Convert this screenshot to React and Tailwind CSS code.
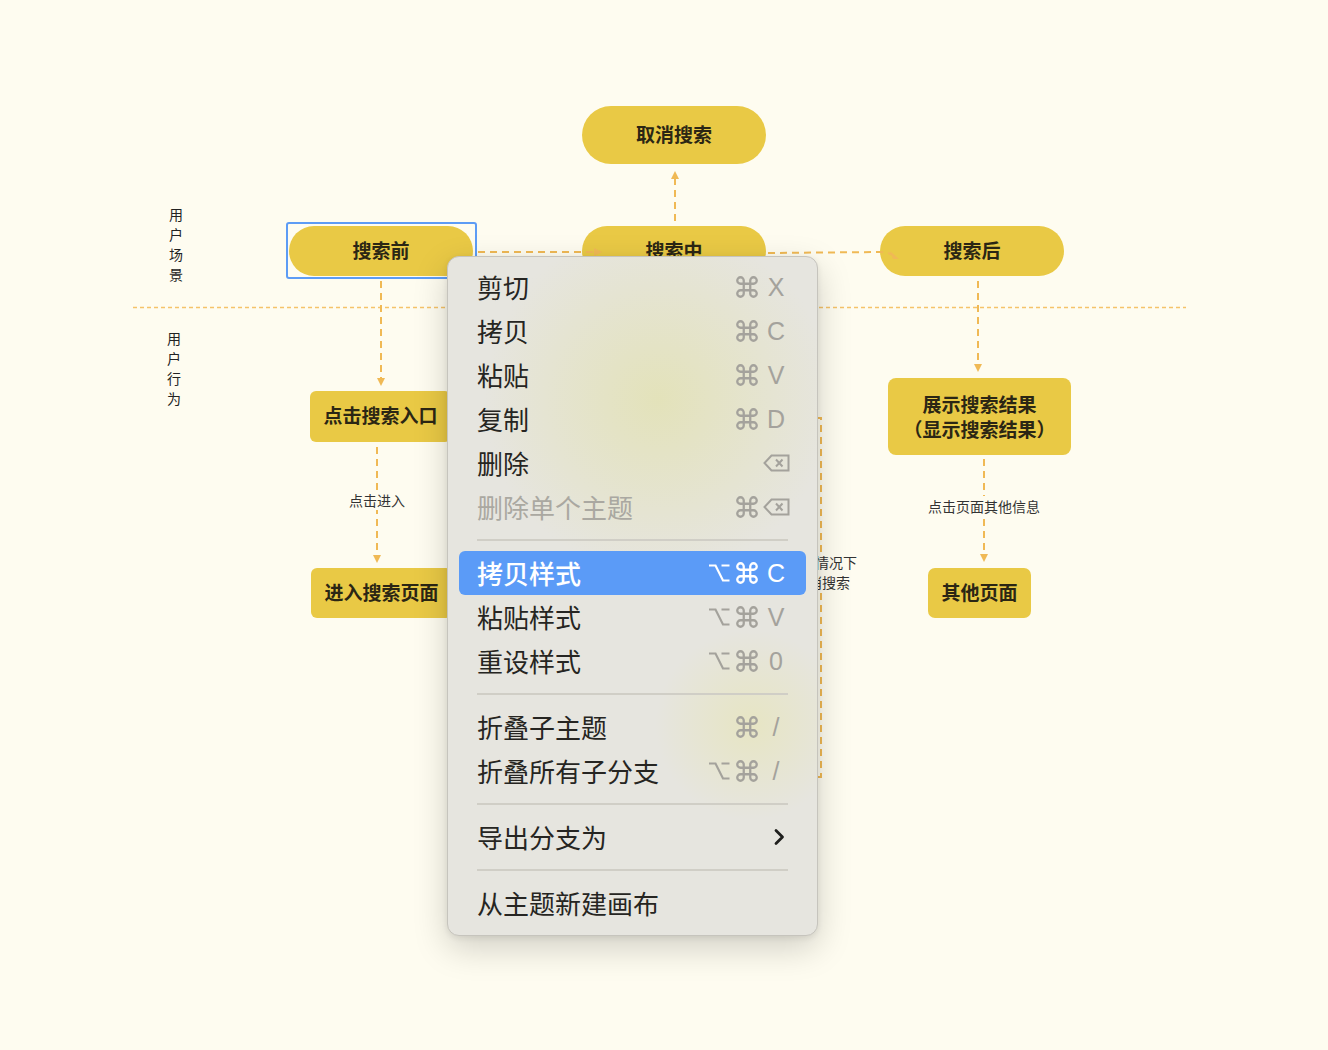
import React from "react";
import { Command } from "lucide-react";

const CJK = "font-['Noto_Sans_CJK_SC','Noto_Sans',sans-serif]";
const LINE = "#f0b955";

// node boxes on the canvas
const Node = ({ x, y, w, h, round, children, className = "" }) => (
  <div
    className={`absolute flex items-center justify-center pb-[2px] bg-[#e9c945] text-[19px] font-bold text-[#2b2614] ${round} ${className}`}
    style={{ left: x, top: y, width: w, height: h }}
  >
    {children}
  </div>
);

const Label = ({ x, y, children }) => (
  <div
    className="absolute h-[20px] bg-[#fefcf0] text-[14px] leading-[20px] text-[#333] whitespace-nowrap"
    style={{ left: x, top: y }}
  >
    {children}
  </div>
);

const down = (x, y) => `${x - 4},${y - 8} ${x + 4},${y - 8} ${x},${y}`;
const up = (x, y) => `${x - 4},${y + 8} ${x + 4},${y + 8} ${x},${y}`;
const right = (x, y) => `${x - 8},${y - 4} ${x - 8},${y + 4} ${x},${y}`;

const Connectors = () => (
  <svg className="absolute inset-0 pointer-events-none" width="1328" height="1050">
    <line x1="133" y1="307.5" x2="1186" y2="307.5" stroke="#f5c36a" strokeWidth="1.3" strokeDasharray="4 3" />
    <g stroke={LINE} strokeWidth="2" strokeDasharray="7 5" fill="none">
      <line x1="381" y1="281" x2="381" y2="378" />
      <line x1="377" y1="447" x2="377" y2="555" />
      <line x1="478" y1="252" x2="594" y2="252" />
      <line x1="675" y1="221" x2="675" y2="179" />
      <path d="M768 253 L880 252 Q888 252 892 255" />
      <line x1="978" y1="281" x2="978" y2="364" />
      <line x1="984" y1="459" x2="984" y2="554" />
      <path d="M780 418 H821 V777 H780" />
    </g>
    <g fill={LINE}>
      <polygon points={down(381, 386)} />
      <polygon points={down(377, 563)} />
      <polygon points={right(602, 252)} />
      <polygon points={up(675, 171)} />
      <polygon points="890,251 893,259 899,259" />
      <polygon points={down(978, 372)} />
      <polygon points={down(984, 562)} />
    </g>
  </svg>
);

const Option = ({ color }) => (
  <svg width="22" height="18" viewBox="0 0 22 18" fill="none" stroke={color} strokeWidth="2.2">
    <path d="M1 1.5h6.5l7.5 15h6.5M13.5 1.5h8" />
  </svg>
);

const Backspace = ({ color }) => (
  <svg width="27" height="18" viewBox="0 0 27 18" fill="none" stroke={color} strokeWidth="2">
    <path d="M8.5 1.5H25.5V16.5H8.5L1.5 9Z" />
    <path d="M13 5.5L19.5 12.5M19.5 5.5L13 12.5" />
  </svg>
);

const Chevron = () => (
  <svg width="12" height="18" viewBox="0 0 12 18" fill="none" stroke="#1f1f1d" strokeWidth="2.8" strokeLinecap="round" strokeLinejoin="round">
    <path d="M3 2.5l6.5 6.5L3 15.5" />
  </svg>
);

const Shortcut = ({ opt, cmd, keyName, del, chevron, color }) => (
  <div className="flex items-center h-[44px]">
    <div className="w-[28px] flex items-center">{opt && <Option color={color} />}</div>
    <div className="w-[30px] flex items-center">
      {cmd && <Command size={26} strokeWidth={2.1} color={color} className="-ml-[2px]" />}
    </div>
    <div
      className="w-[20px] flex items-center justify-center text-[25px] leading-none font-['Liberation_Sans',sans-serif]"
      style={{ color }}
    >
      {del && <div className="shrink-0"><Backspace color={color} /></div>}
      {chevron && <div className="shrink-0 ml-[6px]"><Chevron /></div>}
      {keyName}
    </div>
  </div>
);

const GRAY = "#a4a29c";

const groups = [
  [
    { t: "剪切", cmd: true, k: "X" },
    { t: "拷贝", cmd: true, k: "C" },
    { t: "粘贴", cmd: true, k: "V" },
    { t: "复制", cmd: true, k: "D" },
    { t: "删除", del: true },
    { t: "删除单个主题", cmd: true, del: true, disabled: true },
  ],
  [
    { t: "拷贝样式", opt: true, cmd: true, k: "C", active: true },
    { t: "粘贴样式", opt: true, cmd: true, k: "V" },
    { t: "重设样式", opt: true, cmd: true, k: "0" },
  ],
  [
    { t: "折叠子主题", cmd: true, k: "/" },
    { t: "折叠所有子分支", opt: true, cmd: true, k: "/" },
  ],
  [{ t: "导出分支为", chevron: true }],
  [{ t: "从主题新建画布" }],
];

const Menu = () => (
  <div className="absolute left-[447px] top-[256px] w-[371px] rounded-[12px] border border-[#c6c4bd] bg-[#e6e5df] bg-[image:radial-gradient(circle_at_57%_21%,rgba(227,226,184,0.95),rgba(228,227,190,0)_175px),radial-gradient(circle_at_82%_69%,rgba(231,229,186,0.75),rgba(232,230,190,0)_95px)] pt-[8px] pb-[10px] shadow-[0_12px_34px_rgba(0,0,0,0.18),0_2px_6px_rgba(0,0,0,0.08)]">
    {groups.map((g, gi) => (
      <div key={gi}>
        {gi > 0 && (
          <div className="h-[22px] flex items-center mx-[29px]">
            <div className="h-[2px] w-full bg-[#d0cec6]" />
          </div>
        )}
        {g.map((r) => {
          const color = r.active ? "#ffffff" : GRAY;
          return (
            <div
              key={r.t}
              className={`mx-[11px] h-[44px] pl-[18px] pr-[20px] flex items-center justify-between rounded-[6px] ${
                r.active ? "bg-[#5b9bf7]" : ""
              }`}
            >
              <span
                className={`text-[26px] leading-[44px] ${
                  r.active ? "text-white font-medium" : r.disabled ? "text-[#aaa8a1]" : "text-[#262522]"
                }`}
              >
                {r.t}
              </span>
              <Shortcut
                opt={r.opt}
                cmd={r.cmd}
                keyName={r.k}
                del={r.del}
                chevron={r.chevron}
                color={color}
              />
            </div>
          );
        })}
      </div>
    ))}
  </div>
);

export default function App() {
  return (
    <div className={`relative w-[1328px] h-[1050px] overflow-hidden bg-[#fefcf0] ${CJK}`}>
      {/* row labels */}
      <div className="absolute left-[169px] top-[204px] flex flex-col text-[14px] leading-[20px] text-[#222]">
        <span>用</span><span>户</span><span>场</span><span>景</span>
      </div>
      <div className="absolute left-[167px] top-[328px] flex flex-col text-[14px] leading-[20px] text-[#222]">
        <span>用</span><span>户</span><span>行</span><span>为</span>
      </div>

      <Node x={582} y={106} w={184} h={58} round="rounded-full">取消搜索</Node>
      <Node x={289} y={226} w={184} h={50} round="rounded-full">搜索前</Node>
      <Node x={582} y={226} w={184} h={50} round="rounded-full">搜索中</Node>
      <Node x={880} y={226} w={184} h={50} round="rounded-full">搜索后</Node>
      <Node x={310} y={391} w={141} h={51} round="rounded-[6px]">点击搜索入口</Node>
      <Node x={311} y={568} w={141} h={50} round="rounded-[6px]">进入搜索页面</Node>
      <Node x={888} y={378} w={183} h={77} round="rounded-[8px]" className="flex-col leading-[25px] [font-feature-settings:'halt']">
        <span>展示搜索结果</span>
        <span>（显示搜索结果）</span>
      </Node>
      <Node x={928} y={568} w={103} h={50} round="rounded-[7px]">其他页面</Node>

      <Connectors />

      <Label x={349} y={490}>点击进入</Label>
      <Label x={928} y={496}>点击页面其他信息</Label>
      <div className="absolute left-[787px] top-[552px] w-[70px] text-center text-[14px] leading-[20px] text-[#333]">
        <div className="bg-[#fefcf0]">其他情况下</div>
        <div className="bg-[#fefcf0]">取消搜索</div>
      </div>

      {/* selection frame */}
      <div className="absolute left-[286px] top-[222px] w-[191px] h-[57px] rounded-[3px] border-2 border-[#5d9cf5]" />

      <Menu />
    </div>
  );
}
